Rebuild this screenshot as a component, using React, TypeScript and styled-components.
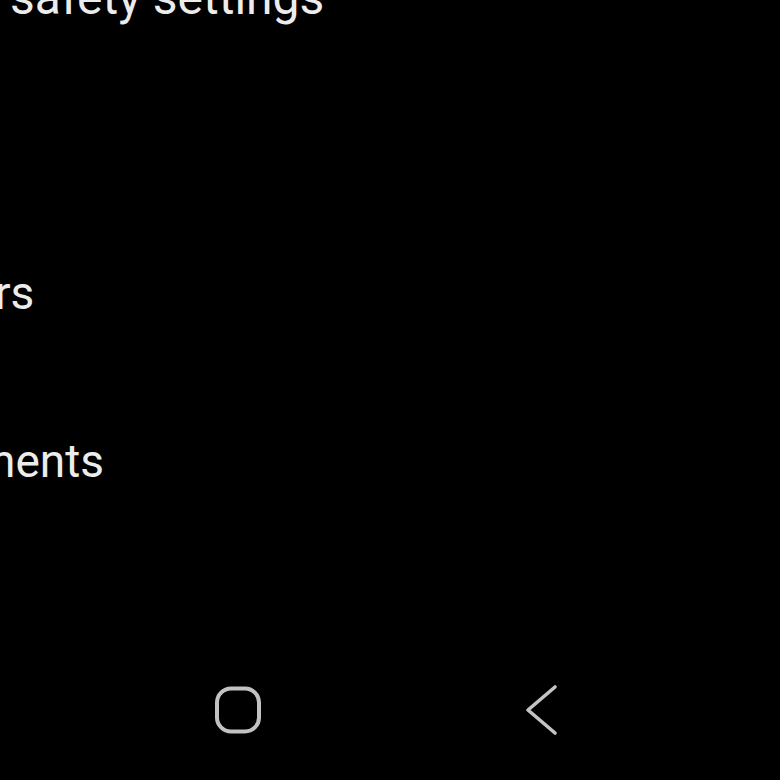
import React from "react";
import styled, { createGlobalStyle } from "styled-components";

const Global = createGlobalStyle`
  html, body {
    margin: 0;
    padding: 0;
    background: #000;
    overflow: hidden;
  }
  #root { background: #000; }
`;

const Screen = styled.div`
  width: 780px;
  height: 780px;
  display: flex;
  flex-direction: column;
  background: #000;
  overflow: hidden;
`;

const List = styled.div`
  display: flex;
  flex-direction: column;
  margin-top: -30px;
`;

const Item = styled.div<{ $space: number; $indent: number; $size: number }>`
  margin-top: ${(p) => p.$space}px;
  text-indent: ${(p) => p.$indent}px;
  font-family: Roboto, "Noto Sans", sans-serif;
  font-size: ${(p) => p.$size}px;
  line-height: 55px;
  color: #ececec;
  white-space: nowrap;
`;

const NavBar = styled.div`
  margin-top: auto;
  height: 140px;
  display: flex;
  align-items: center;
  padding-left: 213px;
  gap: 261px;
`;

const NavButton = styled.div`
  display: flex;
  align-items: center;
  justify-content: center;
`;

const HomeIcon = () => (
  <svg width="50" height="50" viewBox="0 0 50 50">
    <rect x="4" y="3.5" width="42" height="43" rx="14" fill="none" stroke="#c2c2c2" strokeWidth="4" />
  </svg>
);

const BackIcon = () => (
  <svg width="38" height="52" viewBox="0 0 38 52">
    <polyline points="31,3 4,26 31,49" fill="none" stroke="#c4c4c4" strokeWidth="3.6" strokeLinecap="round" strokeLinejoin="round" />
  </svg>
);

export default function App() {
  return (
    <>
      <Global />
      <Screen>
        <List>
          <Item $space={0} $indent={10} $size={48}>safety settings</Item>
          <Item $space={241} $indent={-5} $size={46}>rs</Item>
          <Item $space={113} $indent={-10} $size={46}>nents</Item>
        </List>
        <NavBar>
          <NavButton><HomeIcon /></NavButton>
          <NavButton><BackIcon /></NavButton>
        </NavBar>
      </Screen>
    </>
  );
}
